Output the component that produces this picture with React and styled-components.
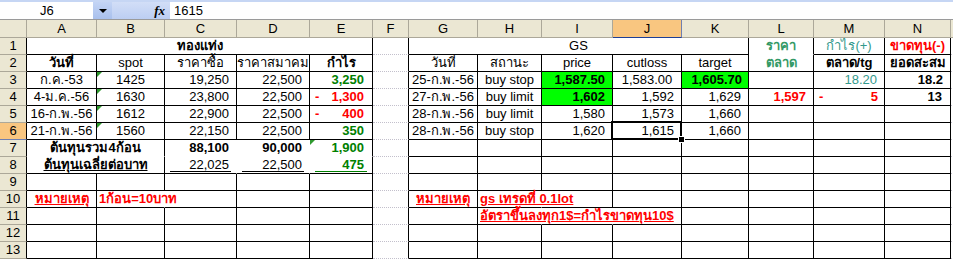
import React from "react";
import styled, { createGlobalStyle, css } from "styled-components";

const GlobalStyle = createGlobalStyle`
  html, body {
    margin: 0;
    padding: 0;
    background: #fff;
    overflow: hidden;
  }
  body {
    font-family: "Liberation Sans", Arial, sans-serif;
  }
`;

// column letters and pixel widths (row header first)
const LETTERS = ["", "A", "B", "C", "D", "E", "F", "G", "H", "I", "J", "K", "L", "M", "N", ""];
const WIDTHS = [27, 70, 68, 72, 73, 63, 36, 69, 64, 71, 69, 67, 65, 71, 66];
const ROWS = 13;
const SEL_COL = 10; // J
const SEL_ROW = 6;

const GREEN = "#008000";
const RED = "#ff0000";
const TEAL = "#339966";
const TEAL2 = "#33998c";
const LIME = "#00ff00";

const num = { al: "right", pr: 7 };
const ctr = { al: "center" };
const note = { b: 1, c: RED, u: 1 };

const CELLS = {
  A1: { t: "ทองแท่ง", span: 5, ...ctr, b: 1 },
  G1: { t: "GS", span: 5, ...ctr },
  L1: { t: "ราคา", ...ctr, b: 1, c: TEAL },
  M1: { t: "กำไร(+)", ...ctr, c: TEAL2 },
  N1: { t: "ขาดทุน(-)", ...ctr, b: 1, c: RED },

  A2: { t: "วันที่", ...ctr, b: 1 },
  B2: { t: "spot", ...ctr },
  C2: { t: "ราคาซื้อ", ...ctr },
  D2: { t: "ราคาสมาคม", ...ctr },
  E2: { t: "กำไร", ...ctr, b: 1 },
  G2: { t: "วันที่", ...ctr },
  H2: { t: "สถานะ", ...ctr },
  I2: { t: "price", ...ctr },
  J2: { t: "cutloss", ...ctr },
  K2: { t: "target", ...ctr },
  L2: { t: "ตลาด", ...ctr, b: 1, c: TEAL },
  M2: { t: "ตลาด/tg", ...ctr, b: 1 },
  N2: { t: "ยอดสะสม", ...ctr, b: 1 },

  A3: { t: "ก.ค.-53", ...ctr },
  B3: { t: "1425", ...ctr, tri: 1 },
  C3: { t: "19,250", ...num },
  D3: { t: "22,500", ...num },
  E3: { t: "3,250", ...num, pr: 8, b: 1, c: GREEN },
  G3: { t: "25-ก.พ.-56", ...ctr },
  H3: { t: "buy stop", ...ctr },
  I3: { t: "1,587.50", ...num, b: 1, bg: LIME },
  J3: { t: "1,583.00", ...ctr },
  K3: { t: "1,605.70", ...num, pr: 6, b: 1, bg: LIME },
  M3: { t: "18.20", ...num, c: TEAL2 },
  N3: { t: "18.2", ...num, b: 1 },

  A4: { t: "4-ม.ค.-56", ...ctr },
  B4: { t: "1630", ...ctr, tri: 1 },
  C4: { t: "23,800", ...num },
  D4: { t: "22,500", ...num },
  E4: { t: "1,300", dash: 1, pr: 8, b: 1, c: RED },
  G4: { t: "27-ก.พ.-56", ...ctr },
  H4: { t: "buy limit", ...ctr },
  I4: { t: "1,602", ...num, b: 1, bg: LIME },
  J4: { t: "1,592", ...num },
  K4: { t: "1,629", ...num },
  L4: { t: "1,597", ...num, b: 1, c: RED },
  M4: { t: "5", dash: 1, pr: 6, b: 1, c: RED },
  N4: { t: "13", ...num, pr: 8, b: 1 },

  A5: { t: "16-ก.พ.-56", ...ctr },
  B5: { t: "1612", ...ctr, tri: 1 },
  C5: { t: "22,900", ...num },
  D5: { t: "22,500", ...num },
  E5: { t: "400", dash: 1, pr: 8, b: 1, c: RED },
  G5: { t: "28-ก.พ.-56", ...ctr },
  H5: { t: "buy limit", ...ctr },
  I5: { t: "1,580", ...num },
  J5: { t: "1,573", ...num },
  K5: { t: "1,660", ...num },

  A6: { t: "21-ก.พ.-56", ...ctr },
  B6: { t: "1560", ...ctr, tri: 1 },
  C6: { t: "22,150", ...num },
  D6: { t: "22,500", ...num },
  E6: { t: "350", ...num, pr: 8, b: 1, c: GREEN },
  G6: { t: "28-ก.พ.-56", ...ctr },
  H6: { t: "buy stop", ...ctr },
  I6: { t: "1,620", ...num },
  J6: { t: "1,615", ...num, sel: 1 },
  K6: { t: "1,660", ...num },

  A7: { t: "ต้นทุนรวม4ก้อน", span: 2, ...ctr, b: 1 },
  C7: { t: "88,100", ...num, b: 1 },
  D7: { t: "90,000", ...num, b: 1 },
  E7: { t: "1,900", ...num, pr: 8, b: 1, c: GREEN, tri: 1 },

  A8: { t: "ต้นทุนเฉลี่ยต่อบาท", span: 2, ...ctr, b: 1, u: 1 },
  C8: { t: "22,025", ...num, acct: 1 },
  D8: { t: "22,500", ...num, acct: 1 },
  E8: { t: "475", ...num, pr: 8, b: 1, c: GREEN, acct: 1 },

  A10: { t: "หมายเหตุ", ...ctr, ...note },
  B10: { t: "1ก้อน=10บาท", b: 1, c: RED, over: 1 },
  G10: { t: "หมายเหตุ", ...ctr, ...note },
  H10: { t: "gs เทรดที่ 0.1lot", ...note, over: 1 },
  H11: { t: "อัตราขึ้นลงทุก1$=กำไรขาดทุน10$", ...note, over: 1 },
};

// borders with no line (white) inside the tables
const NO_RIGHT = new Set(["B7", "C7", "D7", "B8", "C8", "D8", "B10", "H10", "H11", "I11"]);
const NO_BOTTOM = new Set(["A7", "B7", "C7", "D7", "E7", "L1"]);

function edges(r, c, id) {
  const inLeft = c >= 1 && c <= 5 && r <= 13;
  const inRight = c >= 7 && c <= 14 && r <= 13;
  let right = "g";
  let bottom = "g";
  if (inLeft || inRight) {
    right = NO_RIGHT.has(id) ? "n" : "k";
    bottom = NO_BOTTOM.has(id) ? "n" : "k";
  }
  if (c === 6 && r <= 13) right = "k";
  return { right, bottom };
}

const line = (kind) =>
  kind === "k" ? "1px solid #000" : kind === "n" ? "1px solid transparent" : "1px dotted #c3c0cc";

const FormulaBar = styled.div`
  display: flex;
  height: 20px;
  box-sizing: border-box;
  border-top: 2px solid #c6d6f4;
  border-bottom: 1px solid #9a9a9a;
  font: 13px "Liberation Sans", Arial, sans-serif;
  color: #000;
`;

const NameBox = styled.div`
  width: 93px;
  padding-left: 40px;
  box-sizing: border-box;
  display: flex;
  align-items: center;
  background: #fff;
`;

const DropButton = styled.div`
  width: 19px;
  display: flex;
  align-items: center;
  justify-content: center;
  background: linear-gradient(#c3d4f5, #a9c0ec);
  &::after {
    content: "";
    border-left: 4px solid transparent;
    border-right: 4px solid transparent;
    border-top: 4px solid #000;
  }
`;

const FxArea = styled.div`
  width: 58px;
  display: flex;
  align-items: center;
  justify-content: flex-end;
  padding-right: 5px;
  box-sizing: border-box;
  background: linear-gradient(#d2def7, #bccef2);
  font: italic 700 13px "Liberation Serif", serif;
`;

const FormulaInput = styled.div`
  flex: 1;
  display: flex;
  align-items: center;
  padding-left: 4px;
  background: #fff;
`;

const Sheet = styled.div`
  display: grid;
  grid-template-columns: ${WIDTHS.map((w) => `${w}px`).join(" ")} 1fr;
  grid-template-rows: 18px repeat(${ROWS}, 17px);
  width: 953px;
`;

const Header = styled.div`
  box-sizing: border-box;
  display: flex;
  align-items: center;
  justify-content: center;
  font: 13px "Liberation Sans", Arial, sans-serif;
  color: #000;
  background: ${(p) => (p.$active ? "#f9c680" : "#ebe7d3")};
  border-right: 1px solid ${(p) => (p.$active ? "#6f7fb0" : "#aca899")};
  border-bottom: 1px solid ${(p) => (p.$active ? "#1f3f95" : "#aca899")};
`;

const RowHeader = styled(Header)`
  align-items: flex-end;
  padding-bottom: 1px;
  border-right: 1px solid ${(p) => (p.$edge ? "#000" : "#aca899")};
  border-bottom: 1px solid ${(p) => (p.$active ? "#6f7fb0" : "#aca899")};
`;

const Cell = styled.div`
  box-sizing: border-box;
  grid-column: span ${(p) => p.$span};
  display: flex;
  align-items: flex-end;
  justify-content: ${(p) =>
    p.$dash ? "space-between" : { left: "flex-start", center: "center", right: "flex-end" }[p.$align]};
  padding: 0 ${(p) => p.$pr}px 1px ${(p) => (p.$dash ? 5 : 2)}px;
  border-right: ${(p) => line(p.$right)};
  border-bottom: ${(p) => line(p.$bottom)};
  background: ${(p) => p.$bg};
  color: ${(p) => p.$color};
  font: ${(p) => (p.$bold ? 700 : 400)} 13px/15px "Liberation Sans", Arial, sans-serif;
  text-decoration: ${(p) => (p.$underline ? "underline" : "none")};
  white-space: nowrap;
  ${(p) =>
    (p.$tri || p.$over || p.$sel || p.$acct) &&
    css`
      position: relative;
      z-index: ${p.$sel ? 2 : p.$over ? 1 : "auto"};
    `}
  ${(p) =>
    p.$tri &&
    css`
      &::before {
        content: "";
        position: absolute;
        top: 0;
        left: 0;
        border-top: 5px solid #2f9a2f;
        border-right: 5px solid transparent;
      }
    `}
  ${(p) =>
    p.$acct &&
    css`
      &::after {
        content: "";
        position: absolute;
        left: 5px;
        right: 5px;
        bottom: 1px;
        border-bottom: 1px solid ${p.$color};
      }
    `}
  ${(p) =>
    p.$sel &&
    css`
      &::before {
        content: "";
        position: absolute;
        top: -2px;
        left: -2px;
        right: -1px;
        bottom: -1px;
        border: 2px solid #000;
      }
      &::after {
        content: "";
        position: absolute;
        right: -4px;
        bottom: -4px;
        width: 5px;
        height: 5px;
        background: #000;
        border: 1px solid #fff;
      }
    `}
`;

function SheetCell({ id, r, c, data }) {
  const { right, bottom } = edges(r, c, id);
  const d = data || {};
  return (
    <Cell
      $span={d.span || 1}
      $align={d.al || "left"}
      $pr={d.pr ?? 2}
      $right={d.span ? "k" : right}
      $bottom={bottom}
      $bg={d.bg || "#fff"}
      $color={d.c || "#000"}
      $bold={!!d.b}
      $underline={!!d.u}
      $dash={!!d.dash}
      $tri={!!d.tri}
      $over={!!d.over}
      $sel={!!d.sel}
      $acct={!!d.acct}
    >
      {d.dash ? (
        <>
          <span>-</span>
          <span>{d.t}</span>
        </>
      ) : (
        d.t
      )}
    </Cell>
  );
}

function buildRow(r) {
  const out = [
    <RowHeader key={`h${r}`} $active={r === SEL_ROW} $edge={r <= 13}>
      {r}
    </RowHeader>,
  ];
  let c = 1;
  while (c < LETTERS.length) {
    const id = `${LETTERS[c]}${r}`;
    const data = LETTERS[c] ? CELLS[id] : null;
    out.push(<SheetCell key={`${r}-${c}`} id={id} r={r} c={c} data={data} />);
    c += data && data.span ? data.span : 1;
  }
  return out;
}

export default function App() {
  return (
    <>
      <GlobalStyle />
      <FormulaBar>
        <NameBox>J6</NameBox>
        <DropButton />
        <FxArea>fx</FxArea>
        <FormulaInput>1615</FormulaInput>
      </FormulaBar>
      <Sheet>
        {LETTERS.map((l, i) => (
          <Header key={`c${i}`} $active={i === SEL_COL}>
            {l}
          </Header>
        ))}
        {Array.from({ length: ROWS }, (_, i) => buildRow(i + 1))}
      </Sheet>
    </>
  );
}
